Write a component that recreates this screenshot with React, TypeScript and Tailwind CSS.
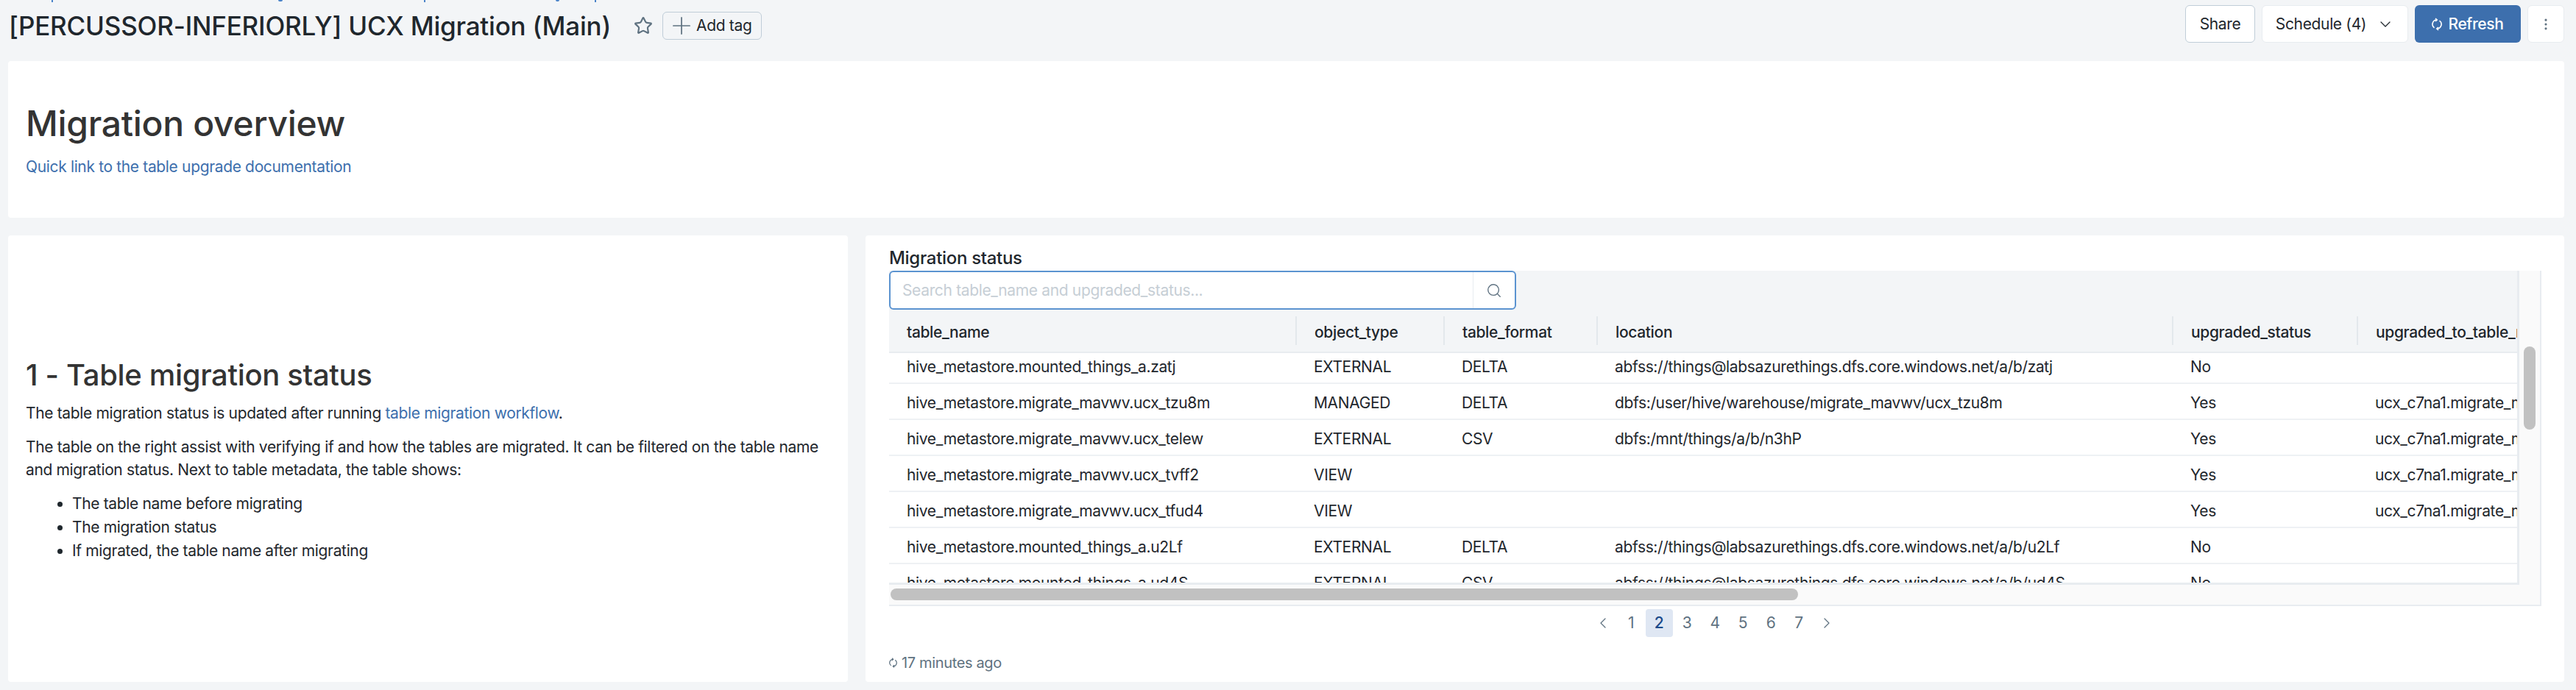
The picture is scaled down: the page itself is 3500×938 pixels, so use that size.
import { Star, Plus, ChevronDown, ChevronLeft, ChevronRight, MoreVertical, Search } from 'lucide-react'

const rows = [
  ['hive_metastore.migrate_mavwv.ucx_tzu8m', 'MANAGED', 'DELTA', 'dbfs:/user/hive/warehouse/migrate_mavwv/ucx_tzu8m', 'Yes', 'ucx_c7na1.migrate_mavwv.ucx_tzu8m'],
  ['hive_metastore.migrate_mavwv.ucx_telew', 'EXTERNAL', 'CSV', 'dbfs:/mnt/things/a/b/n3hP', 'Yes', 'ucx_c7na1.migrate_mavwv.ucx_telew'],
  ['hive_metastore.migrate_mavwv.ucx_tvff2', 'VIEW', '', '', 'Yes', 'ucx_c7na1.migrate_mavwv.ucx_tvff2'],
  ['hive_metastore.migrate_mavwv.ucx_tfud4', 'VIEW', '', '', 'Yes', 'ucx_c7na1.migrate_mavwv.ucx_tfud4'],
  ['hive_metastore.mounted_things_a.u2Lf', 'EXTERNAL', 'DELTA', 'abfss://things@labsazurethings.dfs.core.windows.net/a/b/u2Lf', 'No', ''],
  ['hive_metastore.mounted_things_a.ud4S', 'EXTERNAL', 'CSV', 'abfss://things@labsazurethings.dfs.core.windows.net/a/b/ud4S', 'No', ''],
]
const firstRow = ['hive_metastore.mounted_things_a.zatj', 'EXTERNAL', 'DELTA', 'abfss://things@labsazurethings.dfs.core.windows.net/a/b/zatj', 'No', '']

const headers = ['table_name', 'object_type', 'table_format', 'location', 'upgraded_status', 'upgraded_to_table_name']
const cols = 'grid grid-cols-[552px_201px_208px_782px_251px_400px]'

function SyncIcon({ className }: { className: string }) {
  return (
    <svg className={className} viewBox="0 0 14 18" fill="none" stroke="currentColor" strokeWidth="1.6">
      <path d="M7 3A6 6 0 0 0 3.5 13.9" />
      <path d="M5 1L7.2 3L5 5" />
      <path d="M7 15A6 6 0 0 0 10.5 4.1" />
      <path d="M9 13L6.8 15L9 17" />
    </svg>
  )
}

function Cells({ row }: { row: string[] }) {
  return (
    <>
      {row.map((c, i) => (
        <div key={i} className={`whitespace-nowrap ${i > 0 ? 'pl-[25px]' : 'pl-[24px]'}`}>{c}</div>
      ))}
    </>
  )
}

export default function App() {
  return (
    <div className="h-[938px] w-[3500px] overflow-hidden bg-[#f3f5f7] font-['Inter',sans-serif] tracking-[-0.35px] text-[#1f272d]">
      {/* breadcrumb above is scrolled away, only its descenders are left */}
      <div className="flex h-[3px] pl-[70px]">
        <div className="h-[3px] w-[2px] bg-[#4a83c9]" />
        <div className="ml-[306px] h-[2px] w-[6px] rounded-b-full bg-[#4a83c9]" />
        <div className="ml-[192px] h-[3px] w-[2px] bg-[#4a83c9]" />
        <div className="ml-[177px] h-[2px] w-[5px] rounded-b-full bg-[#4a83c9]" />
        <div className="ml-[48px] h-[3px] w-[2px] bg-[#4a83c9]" />
      </div>

      {/* top bar */}
      <div className="flex h-[80px] items-start justify-between pl-[12px] pr-[16px]">
        <div className="flex items-center pt-[6px]">
          <h1 className="text-[35px] leading-[52px] font-medium tracking-[-0.2px]">[PERCUSSOR-INFERIORLY] UCX Migration (Main)</h1>
          <Star className="ml-[31px] h-[26px] w-[26px] text-[#5f7281]" strokeWidth={2} />
          <button className="ml-[13px] flex h-[38px] items-center gap-[1px] rounded-[6px] border border-[#c0cdd8] pr-[13px] pl-[6px] text-[21px]">
            <Plus className="h-[38px] w-[38px] text-[#5f7281]" strokeWidth={1.1} />
            Add tag
          </button>
        </div>
        <div className="flex items-center gap-[9px] pt-[4px]">
          <button className="h-[51px] w-[95px] rounded-[6px] border border-[#c0cdd8] bg-white text-[21px]">Share</button>
          <button className="flex h-[51px] w-[199px] items-center justify-center gap-[14px] rounded-[6px] border border-[#e8ecf0] bg-white text-[21px]">
            Schedule (4)
            <ChevronDown className="h-[24px] w-[24px]" strokeWidth={1.25} />
          </button>
          <button className="flex h-[51px] w-[144px] items-center justify-center gap-[8px] rounded-[6px] bg-[#3d6fad] text-[21px] font-medium text-white">
            <SyncIcon className="h-[18px] w-[14px]" />
            Refresh
          </button>
          <button className="flex h-[51px] w-[50px] items-center justify-center rounded-[6px] border border-[#e8ecf0] bg-white">
            <MoreVertical className="h-[20px] w-[20px] text-[#5f7281]" strokeWidth={1.75} />
          </button>
        </div>
      </div>

      <div className="flex flex-col gap-[24px] pl-[11px] pr-[16px]">
        {/* overview */}
        <div className="flex h-[213px] flex-col justify-center rounded-[4px] bg-white px-[24px] pb-[5px]">
          <h2 className="text-[48px] leading-[72px] font-medium tracking-[-0.3px] text-[#333]">Migration overview</h2>
          <a className="mt-[7px] text-[21px] leading-[32px] text-[#3d6fad]">Quick link to the table upgrade documentation</a>
        </div>

        <div className="flex h-[607px] gap-[24px]">
          {/* left text card */}
          <div className="flex w-[1141px] flex-col justify-center rounded-[4px] bg-white px-[24px] text-[21px]">
            <h2 className="text-[40px] leading-[56px] font-medium text-[#333]">1 - Table migration status</h2>
            <p className="mt-[8px] leading-[31px]">
              The table migration status is updated after running <a className="text-[#3d6fad]">table migration workflow</a>.
            </p>
            <p className="mt-[15px] leading-[31px]">
              The table on the right assist with verifying if and how the tables are migrated. It can be filtered on the table name and migration status. Next to table metadata, the table shows:
            </p>
            <ul className="mt-[15px] list-disc pl-[63px] leading-[32px]">
              <li>The table name before migrating</li>
              <li>The migration status</li>
              <li>If migrated, the table name after migrating</li>
            </ul>
          </div>

          {/* table card */}
          <div className="flex w-[2308px] flex-col rounded-[4px] bg-white px-[32px]">
            <div className="pt-[16px] pb-[2px] text-[24px] leading-[30px] font-medium tracking-[-0.3px]">Migration status</div>
            <div className="relative w-[2245px]">
              <div className="flex h-[427px]">
                <div className="h-[427px] w-[2215px] overflow-hidden border-r-[3px] border-b-[3px] border-[#e8ecf0]">
                  <div className="bg-[#f3f5f7] pt-[53px]">
                    <div className={`${cols} h-[59px] w-[2394px] items-center border-b-[2px] border-[#e8ecf0] text-[21px] font-medium`}>
                      {headers.map((h, i) => (
                        <div key={h} className={`flex h-[39px] items-center pt-[4px] pl-[24px] ${i > 0 ? 'border-l-2 border-[#e3e8ec]' : ''}`}>{h}</div>
                      ))}
                    </div>
                  </div>
                  {/* first row slides under the sticky header */}
                  <div className={`${cols} h-[42px] w-[2394px] items-center border-b-2 border-[#eef1f4] bg-white pb-[2px] text-[21px]`}>
                    <Cells row={firstRow} />
                  </div>
                  {rows.map((r) => (
                    <div key={r[0]} className={`${cols} h-[49px] w-[2394px] items-center border-b-2 border-[#eef1f4] bg-white pt-[4px] text-[21px]`}>
                      <Cells row={r} />
                    </div>
                  ))}
                </div>
                {/* vertical scrollbar */}
                <div className="w-[30px] border-r-2 border-[#e8ecf0] bg-[#fafafa] pt-[103px] pl-[6px]">
                  <div className="h-[113px] w-[16px] rounded-full bg-[#c1c1c1]" />
                </div>
              </div>
              {/* horizontal scrollbar */}
              <div className="h-[29px] border-r-2 border-b-2 border-[#e8ecf0] bg-[#fafafa] pt-[5px] pl-[2px]">
                <div className="h-[16px] w-[1233px] rounded-full bg-[#c1c1c1]" />
              </div>
              {/* search sits over the table's gray header */}
              <div className="absolute top-0 left-0 flex h-[53px] w-[852px] rounded-[6px] border-2 border-[#5b93d0] bg-white text-[21px]">
                <div className="flex flex-1 items-center pl-[16px] text-[#c6ced5]">Search table_name and upgraded_status...</div>
                <div className="flex w-[57px] items-center justify-center border-l border-[#e8ecf0]">
                  <Search className="h-[22px] w-[22px] text-[#5f7281]" strokeWidth={1.5} />
                </div>
              </div>
            </div>
            {/* pagination */}
            <div className="mt-[4px] flex h-[38px] items-center justify-center text-[21px] text-[#5f7281]">
              <div className="flex w-[38px] justify-center">
                <ChevronLeft className="h-[24px] w-[24px]" strokeWidth={1.25} />
              </div>
              {[1, 2, 3, 4, 5, 6, 7].map((n) => (
                <div key={n} className="flex w-[38px] justify-center">
                  <div className={`flex h-[38px] w-[37px] items-center justify-center rounded-[4px] ${n === 2 ? 'bg-[#dfe7f3] font-medium text-[#1b4a8a]' : ''}`}>{n}</div>
                </div>
              ))}
              <div className="flex w-[38px] justify-center">
                <ChevronRight className="h-[24px] w-[24px]" strokeWidth={1.25} />
              </div>
            </div>
            <div className="mt-[20px] flex items-center gap-[6px] text-[20px] text-[#5f7281]">
              <SyncIcon className="h-[16px] w-[11px]" />
              17 minutes ago
            </div>
          </div>
        </div>
      </div>
    </div>
  )
}
